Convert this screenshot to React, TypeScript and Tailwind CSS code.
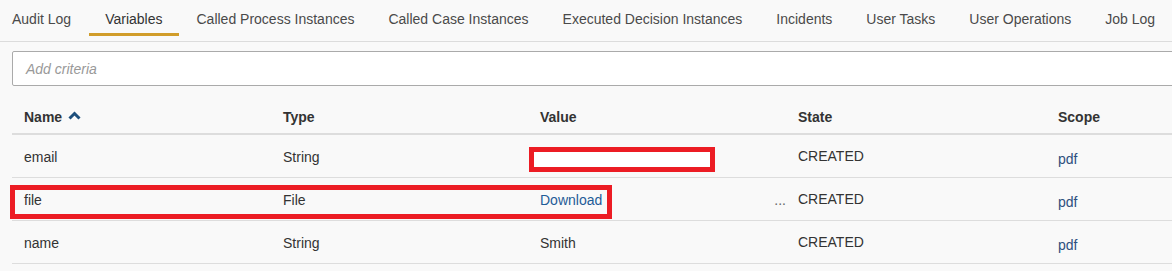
import React from "react";

// BLOCK 1: Data
const tabs = [
  "Audit Log",
  "Variables",
  "Called Process Instances",
  "Called Case Instances",
  "Executed Decision Instances",
  "Incidents",
  "User Tasks",
  "User Operations",
  "Job Log",
];

interface VariableRow {
  name: string;
  type: string;
  value: string;
  isLink?: boolean;
  state: string;
  scope: string;
}

const rows: VariableRow[] = [
  { name: "email", type: "String", value: "", state: "CREATED", scope: "pdf" },
  { name: "file", type: "File", value: "Download", isLink: true, state: "CREATED", scope: "pdf" },
  { name: "name", type: "String", value: "Smith", state: "CREATED", scope: "pdf" },
];

const cols = "grid grid-cols-[259px_257px_258px_260px_258px]";

// BLOCK 2: Sort icon
function ChevronUp() {
  return (
    <svg width="13" height="9" viewBox="0 0 13 9" className="ml-[6px] mt-[-3px]">
      <polyline points="1.5,7.5 6.5,2.5 11.5,7.5" fill="none" stroke="#1d4f7c" strokeWidth="3" />
    </svg>
  );
}

// BLOCK 3: Main Component
export default function App() {
  return (
    <div className="w-[1172px] h-[271px] overflow-hidden bg-[#f9f9f9] text-[14px] leading-5 text-[#333] font-['Liberation_Sans',Arial,sans-serif]">
      {/* BLOCK 3.1: Tabs */}
      <nav className="flex h-[42px] gap-[2px] border-b border-[#dcdcdc]">
        {tabs.map((t, i) => (
          <div
            key={t}
            className={`flex h-[36px] flex-col pt-[9px] whitespace-nowrap ${i === 0 ? "pl-[12px] pr-4" : "px-4"} ${
              t === "Variables" ? "border-b-[3px] border-[#d19d2a] text-[#333]" : "text-[#4a4a4a]"
            }`}
          >
            {t}
          </div>
        ))}
      </nav>

      {/* BLOCK 3.2: Search input */}
      <div className="pl-[12px] pt-[9px]">
        <div className="flex h-[35px] w-[1180px] items-center rounded-[2px] border border-[#aaaaaa] bg-white pl-[13px]">
          <span className="italic text-[#999]">Add criteria</span>
        </div>
      </div>

      {/* BLOCK 3.3: Table */}
      <div className="ml-[12px] mt-[9px]">
        <div className={`${cols} border-b-2 border-[#dddddd] pt-[12px] pb-[6px] font-bold`}>
          <div className="flex items-center pl-[12px]">
            Name
            <ChevronUp />
          </div>
          <div className="pl-[12px]">Type</div>
          <div className="pl-[12px]">Value</div>
          <div className="pl-[12px]">State</div>
          <div className="pl-[12px]">Scope</div>
        </div>

        {rows.map((r, i) => (
          <div key={r.name} className={`${cols} relative h-[43px] border-b border-[#dddddd]`}>
            <div className="pl-[12px] pt-[12px]">{r.name}</div>
            <div className="pl-[12px] pt-[12px]">{r.type}</div>
            <div className="flex justify-between pl-[12px] pt-[12px]">
              <span className={r.isLink ? "text-[#1f5c97]" : ""}>{r.value}</span>
              {r.isLink && <span className="text-[#666]">...</span>}
            </div>
            <div className="pl-[12px] pt-[11px]">{r.state}</div>
            <div className="pl-[12px] pt-[14px] text-[#2e4f7e]">{r.scope}</div>

            {/* annotation boxes */}
            {i === 0 && (
              <div className="absolute left-[517px] top-[12px] h-[25px] w-[186px] border-[5px] border-[#ec1c24] bg-white" />
            )}
            {i === 1 && (
              <div className="absolute left-[-2px] top-[7px] h-[34px] w-[602px] border-[5px] border-[#ec1c24]" />
            )}
          </div>
        ))}
      </div>
    </div>
  );
}
